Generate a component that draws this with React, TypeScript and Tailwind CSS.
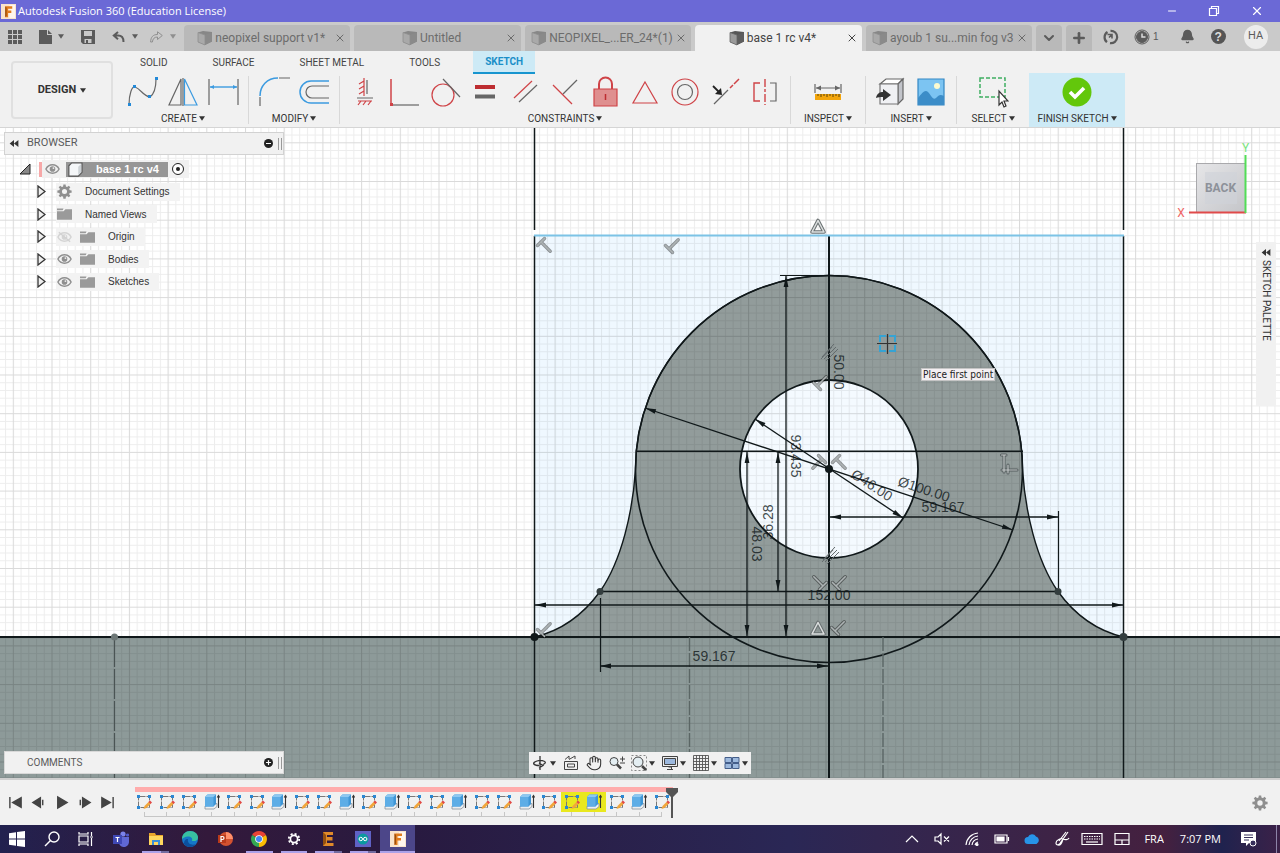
import React from 'react';
import { Bell, X, ChevronDown, Plus, Minus, Hand } from 'lucide-react';

type Feature = 'sketch' | 'extrude';

interface DocTab {
  name: string;
  active?: boolean;
}

interface TreeRow {
  name: string;
  icon: 'gear' | 'folder';
  eye?: 'on' | 'off';
}

const docTabs: DocTab[] = [
  { name: 'neopixel support v1*' },
  { name: 'Untitled' },
  { name: 'NEOPIXEL_...ER_24*(1)' },
  { name: 'base 1 rc v4*', active: true },
  { name: 'ayoub 1 su...min fog v3' },
];

const treeRows: TreeRow[] = [
  { name: 'Document Settings', icon: 'gear' },
  { name: 'Named Views', icon: 'folder' },
  { name: 'Origin', icon: 'folder', eye: 'off' },
  { name: 'Bodies', icon: 'folder', eye: 'on' },
  { name: 'Sketches', icon: 'folder', eye: 'on' },
];

const S: Feature = 'sketch';
const E: Feature = 'extrude';
const features: Feature[] = [S, S, S, E, S, S, E, S, S, E, S, E, S, S, E, S, S, E, S, S, E, S, E, S];

const Caret = ({ className = '' }: { className?: string }) => (
  <svg viewBox="0 0 8 6" className={`h-[5px] w-[6px] shrink-0 fill-current ${className}`}>
    <path d="M0 0h8L4 6z" />
  </svg>
);

const CubeIcon = ({ active }: { active?: boolean }) => (
  <svg viewBox="0 0 16 16" className={`h-4 w-4 shrink-0 ${active ? '' : 'opacity-50'}`}>
    <path d="M1 2.500L6 1l9 1v9.500L8 15 1 12z" fill="#565656" />
    <path d="M1 2.500l7 2.500v10L1 12z" fill="#9a9a9a" />
    <path d="M8 5l7-3v9.500L8 15z" fill="#5d5d5d" />
    <path d="M1 2.500v9.500l7 3V5z" fill="none" stroke="#666" strokeWidth=".8" />
  </svg>
);

const AppLogo = ({ className = '' }: { className?: string }) => (
  <svg viewBox="0 0 16 16" className={`shrink-0 ${className}`}>
    <rect width="16" height="16" fill="#f8e3cc" />
    <path d="M9 1h6v14H9z" fill="#fff6ec" />
    <path d="M4.500 2.500H12V5H7.500v2H11v2.500H7.500V14h-3z" fill="#e07b1d" />
    <path d="M4.500 2.500l1.500 1.500v8.500L4.500 14z" fill="#9c4d0b" />
  </svg>
);

const GearIcon = ({ className = '' }: { className?: string }) => (
  <svg viewBox="-8 -8 16 16" className={`shrink-0 ${className}`}>
    <circle r="4.200" fill="none" stroke="currentColor" strokeWidth="3" />
    {[0, 45, 90, 135, 180, 225, 270, 315].map((a) => (
      <path key={a} d="M-1.600 -4.500L-1.200 -7.600H1.200L1.600 -4.500z" fill="currentColor" transform={`rotate(${a})`} />
    ))}
  </svg>
);

const TitleBar = () => (
  <header className="flex h-[22px] shrink-0 items-center justify-between bg-[#6b69d6] text-white">
    <div className="flex items-center gap-[2px] pl-[1px]">
      <AppLogo className="h-[15px] w-[15px]" />
      <span className="font-['Open_Sans',sans-serif] text-[11px]">Autodesk Fusion 360 (Education License)</span>
    </div>
    <div className="flex items-center gap-[30px] pr-4">
      <button aria-label="Minimize"><Minus className="h-3 w-3" strokeWidth={2} /></button>
      <button aria-label="Restore">
        <svg viewBox="0 0 12 12" className="h-3 w-3" fill="none" stroke="#fff" strokeWidth="1.200">
          <path d="M1.500 3.500h7v7h-7zM3.500 3.500v-2h7v7h-2" />
        </svg>
      </button>
      <button aria-label="Close"><X className="h-[14px] w-[14px]" strokeWidth={2} /></button>
    </div>
  </header>
);

const TabBar = () => (
  <div className="flex h-[29px] shrink-0 bg-[#cacaca] text-[#5b5b5b]">
    <div className="flex w-[184px] shrink-0 items-center pl-2">
      <button aria-label="Data panel">
        <svg viewBox="0 0 14 14" className="h-[14px] w-[14px] fill-current">
          {[0, 5, 10].map((x) => [0, 5, 10].map((y) => <rect key={`${x}-${y}`} x={x} y={y} width="4" height="4" />))}
        </svg>
      </button>
      <button aria-label="File" className="ml-[17px] flex items-center gap-[5px]">
        <svg viewBox="0 0 14 16" className="h-4 w-[14px] fill-current"><path d="M0 1h8v5h5v9H0zM9 1l4 4H9z" /></svg>
        <Caret />
      </button>
      <button aria-label="Save" className="ml-[17px]">
        <svg viewBox="0 0 14 14" className="h-[14px] w-[14px]">
          <path d="M0 0h14v14H2l-2-2z" fill="#5b5b5b" />
          <path d="M3 1h8v5H3zM3.500 9h7v4h-7z" fill="#cacaca" />
          <path d="M5 10h2v3H5z" fill="#5b5b5b" />
        </svg>
      </button>
      <button aria-label="Undo" className="ml-[17px] flex items-center gap-[7px]">
        <svg viewBox="0 0 13 12" className="h-3 w-[13px]">
          <path d="M6 1L1.800 4.600 6 8.200M2.500 4.600H6c3.500 0 5.500 2.500 5.500 6.400" fill="none" stroke="currentColor" strokeWidth="2" />
        </svg>
        <Caret />
      </button>
      <button aria-label="Redo" className="ml-3 flex items-center gap-[7px] text-[#8f8f8f]">
        <svg viewBox="0 0 13 12" className="h-3 w-[13px]">
          <path d="M12.300 4.500L7.500 .8v2.700C3 3.500 .8 6 .6 11h1.800C2.800 8 4 6 7.500 6v2.500z" fill="none" stroke="currentColor" />
        </svg>
        <Caret />
      </button>
    </div>
    <nav className="flex min-w-0 flex-1 gap-1 pt-[3px] font-['Roboto',sans-serif]">
      {docTabs.map((tab) => (
        <div
          key={tab.name}
          className={`flex min-w-0 flex-1 items-center rounded-t-sm px-1 ${tab.active ? 'bg-[#f1f1f1] text-[#444]' : 'bg-[#b9b9b9] text-[#6c6c6c]'}`}
        >
          <button className="flex min-w-0 flex-1 items-center justify-center gap-[2px]">
            <CubeIcon active={tab.active} />
            <span className="whitespace-nowrap text-[12px]">{tab.name}</span>
          </button>
          <button aria-label={`Close ${tab.name}`} className="shrink-0"><X className="h-3 w-3" strokeWidth={2} /></button>
        </div>
      ))}
    </nav>
    <div className="flex w-[248px] shrink-0 items-center">
      <div className="flex h-full gap-1 px-1 pt-[3px]">
        <button aria-label="All tabs" className="flex w-[26px] items-center justify-center rounded-t-sm bg-[#b9b9b9]">
          <ChevronDown className="h-4 w-4" strokeWidth={3} />
        </button>
        <button aria-label="New tab" className="flex w-[26px] items-center justify-center rounded-t-sm bg-[#b9b9b9]">
          <Plus className="h-4 w-4" strokeWidth={4} />
        </button>
      </div>
      <button aria-label="Updates" className="ml-[7px]">
        <svg viewBox="0 0 16 16" className="h-4 w-4" fill="none" stroke="#5b5b5b" strokeWidth="2.200">
          <path d="M4 13.200A6.200 6.200 0 0 1 4.500 3M7.500 1.800A6.200 6.200 0 1 1 7 14.100" />
          <path d="M4.500 5.500L9 5.500 9 9.500M9 5.500L6 8.500" strokeWidth="1.600" />
        </svg>
      </button>
      <button aria-label="Job status" className="ml-[15px] flex items-center gap-[3px] text-[10px]">
        <svg viewBox="0 0 16 16" className="h-4 w-4" fill="none" stroke="#5b5b5b">
          <circle cx="8" cy="8" r="7" strokeWidth="1" />
          <circle cx="8" cy="8" r="5.500" fill="#5b5b5b" />
          <path d="M8 4.500V8h3.500" stroke="#ddd" strokeWidth="1.500" />
        </svg>
        1
      </button>
      <button aria-label="Notifications" className="ml-[21px]"><Bell className="h-[15px] w-[15px] fill-current" /></button>
      <button aria-label="Help" className="ml-4 flex h-[15px] w-[15px] items-center justify-center rounded-full bg-[#555] text-[12px] font-bold text-[#ddd]">?</button>
      <button className="ml-[18px] flex h-6 w-6 items-center justify-center rounded-full bg-[#ececec] font-['Roboto',sans-serif] text-[11px]">HA</button>
    </div>
  </div>
);

const Tool = ({ name, children }: { name: string; children: React.ReactNode }) => (
  <button aria-label={name} className="flex w-10 justify-center">
    <svg viewBox="0 0 32 32" className="h-8 w-8" fill="none" strokeWidth="1.200">{children}</svg>
  </button>
);

const Group = ({ label, className = '', children }: { label: string; className?: string; children: React.ReactNode }) => (
  <div className={`flex shrink-0 flex-col items-center justify-between px-[5px] pt-[3px] ${className}`}>
    <div className="flex">{children}</div>
    <button className="flex items-center gap-[2px] text-[10px] leading-[17px] whitespace-nowrap text-[#333]">
      {label} <Caret />
    </button>
  </div>
);

const Separator = () => <div className="mt-[3px] mb-[3px] w-px bg-[#d8d8d8]" />;

const RED = '#cf4347';
const DARK = '#666';
const BLUE = '#3c9be0';

const Ribbon = () => (
  <section className="flex h-[77px] shrink-0 border-b border-[#d5d5d5] bg-[#f1f1f1] font-['Roboto',sans-serif]">
    <div className="w-[118px] shrink-0 pt-[10px] pr-[5px] pb-[8px] pl-[11px]">
      <button className="flex h-full w-full items-center justify-center gap-1 rounded border-2 border-[#e0e0e0] text-[11px] font-bold text-[#333]">
        DESIGN <Caret />
      </button>
    </div>
    <div className="flex min-w-0 flex-1 flex-col">
      <nav className="flex h-[23px] shrink-0 gap-[21px] pl-[10px] text-[10px] text-[#444]">
        <button className="px-3">SOLID</button>
        <button className="px-3">SURFACE</button>
        <button className="px-3">SHEET METAL</button>
        <button className="px-3">TOOLS</button>
        <button className="border-b-2 border-[#1795cf] bg-[#cdeaf6] px-3 font-bold text-[#1b8fc8]">SKETCH</button>
      </nav>
      <div className="-mt-px flex min-h-0 flex-1">
        <Group label="CREATE">
          <Tool name="Spline">
            <path d="M2 29C2 18 5 10 8 11c6 2 8 9 15 10 4-3 6-10 6-18" stroke={DARK} />
            <g fill="#2389d7"><path d="M1 27h3v3H1zM6 9h3v3H6zM21 19h3v3h-3zM28 1h3v3h-3z" /></g>
          </Tool>
          <Tool name="Mirror">
            <path d="M14 3v26H2z" stroke={DARK} />
            <path d="M16 2v28" stroke="#888" strokeWidth="1.600" />
            <path d="M17.500 3v26H30z" stroke={BLUE} />
          </Tool>
          <Tool name="Sketch dimension">
            <path d="M2 3v26M31 3v26" stroke={DARK} />
            <path d="M3 11h27" stroke={BLUE} strokeWidth="1.400" />
            <path d="M3 11l4-2v4zM30 11l-4-2v4z" fill={BLUE} />
          </Tool>
        </Group>
        <Separator />
        <Group label="MODIFY">
          <Tool name="Fillet">
            <path d="M2 30V21M21 2h11" stroke={DARK} />
            <path d="M2 20C2 10 9 2 20 2" stroke={BLUE} strokeWidth="1.500" />
          </Tool>
          <Tool name="Offset">
            <path d="M31 5H13a11 11 0 0 0 0 22h18" stroke={BLUE} strokeWidth="1.500" />
            <path d="M31 10H14a6 6 0 0 0 0 12h17" stroke={DARK} />
          </Tool>
        </Group>
        <Separator />
        <Group label="CONSTRAINTS">
          <Tool name="Horizontal/Vertical">
            <path d="M15 2v18M15 5l-5 3M15 10l-5 3M15 15l-5 3M9 25h14M12 25l-3 4M17 25l-3 4M22 25l-3 4" stroke={RED} />
            <path d="M18 4v14M8 22h16" stroke={DARK} />
          </Tool>
          <Tool name="Coincident">
            <path d="M2 3v26" stroke={RED} strokeWidth="1.500" />
            <path d="M2 29h28" stroke={DARK} />
            <path d="M1 27h3v3H1z" fill={RED} />
          </Tool>
          <Tool name="Tangent">
            <circle cx="14" cy="19" r="11" stroke={RED} />
            <path d="M14 3l17 18" stroke={DARK} />
          </Tool>
          <Tool name="Equal">
            <path d="M6 11h20" stroke="#bd2d31" strokeWidth="4" />
            <path d="M6 20.500h20" stroke={DARK} strokeWidth="4" />
          </Tool>
          <Tool name="Parallel">
            <path d="M5 22L23 5" stroke={RED} />
            <path d="M10 26L28 9" stroke={DARK} />
          </Tool>
          <Tool name="Perpendicular">
            <path d="M4 9l19 19" stroke={RED} />
            <path d="M14 18L28 4" stroke={DARK} />
          </Tool>
          <Tool name="Fix">
            <path d="M10 14V8a6 6 0 0 1 13 0v6" stroke={RED} strokeWidth="2" />
            <path d="M5 13h23v17H5z" fill="#df8f8f" stroke={RED} />
            <path d="M16.500 18v6" stroke="#bd2d31" strokeWidth="1.500" />
          </Tool>
          <Tool name="Midpoint"><path d="M16 6l12 21H4z" stroke={RED} /></Tool>
          <Tool name="Concentric">
            <circle cx="16" cy="16" r="13" stroke={RED} />
            <circle cx="16" cy="16" r="7.500" stroke={DARK} />
          </Tool>
          <Tool name="Collinear">
            <path d="M5 28l14-14" stroke={DARK} />
            <path d="M21 12l3-3M25 8l5-5" stroke={RED} strokeWidth="1.500" />
            <path d="M4 10l7 7" stroke="#222" strokeWidth="1.800" />
            <path d="M13 19l-7-1 6-6z" fill="#222" />
          </Tool>
          <Tool name="Symmetry">
            <path d="M11 7H5v18h6" stroke={RED} strokeWidth="1.400" />
            <path d="M16 3v26" stroke={RED} strokeWidth="1.400" strokeDasharray="8 2 3 2" />
            <path d="M21 7h6v18h-6" stroke={DARK} />
          </Tool>
        </Group>
        <Separator />
        <Group label="INSPECT" className="w-[74px]">
          <Tool name="Measure">
            <path d="M3 8v9M29 8v9M4 12h24" stroke={DARK} />
            <path d="M4 12l5-2.500v5zM28 12l-5-2.500v5z" fill={DARK} />
            <path d="M3 18h26v6H3z" fill="#f2a50c" />
            <path d="M6 18v2M9 18v3M12 18v2M15 18v3M18 18v2M21 18v3M24 18v2M27 18v3" stroke="#5d4208" strokeWidth="1" />
          </Tool>
        </Group>
        <Separator />
        <Group label="INSERT">
          <Tool name="Insert derive">
            <path d="M5 8l6-5h17l-5 5z" fill="#fff" stroke="#666" />
            <path d="M23 8l5-5v20l-5 5z" fill="#c2c4ca" stroke="#666" />
            <path d="M5 8h18v20H5z" fill="#f0f1f4" stroke="#777" />
            <path d="M1 22c1-5 4-6 7-6v-3l8 6-8 6v-4c-3 0-5 0-7 1z" fill="#333" />
          </Tool>
          <Tool name="Canvas">
            <path d="M3 3h26v26H3z" fill="#7cc4f2" stroke="#3387c4" />
            <circle cx="22" cy="10" r="3" fill="#fcfbd0" />
            <path d="M3 22c4-5 7-9 10-6s5 9 8 6 4-4 8-2v9H3z" fill="#3c8dc8" />
          </Tool>
        </Group>
        <Separator />
        <Group label="SELECT" className="w-[72px]">
          <Tool name="Window select">
            <path d="M3 2h25v19H3z" stroke="#3fae62" strokeDasharray="4 2" strokeWidth="1.500" />
            <path d="M22 15v14l3-3 2 5 2-1-2-5h4z" fill="#fff" stroke="#333" />
          </Tool>
        </Group>
        <Group label="FINISH SKETCH" className="w-24 bg-[#cdeaf6]">
          <Tool name="Finish sketch">
            <circle cx="16" cy="16" r="14.500" fill="#63c70b" />
            <path d="M9 16l5 5 9-9" stroke="#fff" strokeWidth="3.600" />
          </Tool>
        </Group>
      </div>
    </div>
  </section>
);

const Arrow = ({ x, y, angle }: { x: number; y: number; angle: number }) => (
  <path d="M0 0L-11 2.400V-2.400z" fill="#10181a" stroke="none" transform={`translate(${x} ${y}) rotate(${angle})`} />
);

const Dimension = ({ x1, y1, x2, y2 }: { x1: number; y1: number; x2: number; y2: number }) => {
  const angle = (Math.atan2(y2 - y1, x2 - x1) * 180) / Math.PI;
  return (
    <g>
      <path d={`M${x1} ${y1}L${x2} ${y2}`} strokeWidth="1.300" />
      <Arrow x={x2} y={y2} angle={angle} />
      <Arrow x={x1} y={y1} angle={angle + 180} />
    </g>
  );
};

const Label = ({ x, y, angle = 0, children }: { x: number; y: number; angle?: number; children: string }) => (
  <text x="0" y="5" textAnchor="middle" fontSize="14" fill="#10181a" fillOpacity=".8" stroke="none" transform={`translate(${x} ${y}) rotate(${angle})`}>
    {children}
  </text>
);

// perpendicular glyph, stem pointing right at 0 degrees
const Perp = ({ x, y, angle }: { x: number; y: number; angle: number }) => (
  <g transform={`translate(${x} ${y}) rotate(${angle})`} fill="none">
    <path d="M0 -5V5M0 0H13" stroke="#000" strokeOpacity=".4" strokeWidth="3.400" strokeLinecap="round" />
    <path d="M0 -5V5M0 0H13" stroke="#adb3b4" strokeWidth="1.600" strokeLinecap="round" />
  </g>
);

const Parallel = ({ x, y }: { x: number; y: number }) => (
  <g transform={`translate(${x} ${y})`} stroke="#646c6e" strokeWidth="1" fill="none">
    <path d="M-7 4L5 -9M-5 6L7 -6M-3 8L9 -4M-8 6L3 -6" />
  </g>
);

const Midpoint = ({ x, y }: { x: number; y: number }) => (
  <g transform={`translate(${x} ${y})`} fill="none" strokeLinejoin="round">
    <path d="M0 -5.500L6 6H-6z" stroke="#6b7273" strokeWidth="3.600" />
    <path d="M0 -5.500L6 6H-6z" stroke="#dcdfdf" strokeWidth="1.500" />
  </g>
);

const PROFILE =
  'M534.500 637C560 631 583 615 600 591.500C622 560 633 510 635.500 469A193.500 193.500 0 0 1 1022.500 469C1025 510 1036 560 1058 591.500C1075 615 1098 631 1123.500 637z';

const SketchCanvas = () => (
  <svg
    viewBox="0 128 1280 650"
    preserveAspectRatio="xMidYMid slice"
    className="absolute inset-0 h-full w-full bg-white font-['Liberation_Sans',sans-serif]"
  >
    <defs>
      <pattern id="minor" width="7.740" height="7.740" x="12.800" y="142.300" patternUnits="userSpaceOnUse">
        <path d="M0 .5H7.740M.5 0V7.740" stroke="#000" strokeOpacity=".07" />
      </pattern>
      <pattern id="major" width="38.700" height="38.700" x="12.800" y="142.300" patternUnits="userSpaceOnUse">
        <path d="M0 .5H38.700M.5 0V38.700" stroke="#000" strokeOpacity=".08" />
      </pattern>
      <linearGradient id="cube" x1="0" y1="0" x2="1" y2="1">
        <stop offset="0" stopColor="#e6e6e8" />
        <stop offset="1" stopColor="#c4c5c9" />
      </linearGradient>
    </defs>
    <rect x="534.500" y="236" width="589" height="401" fill="#eff8ff" />
    <path d={PROFILE} fill="#929c9b" />
    <circle cx="829" cy="469" r="89" fill="#f4faff" />
    <rect x="0" y="637" width="1280" height="141" fill="#8d9a99" />
    <rect x="0" y="128" width="1280" height="650" fill="url(#minor)" />
    <rect x="0" y="128" width="1280" height="650" fill="url(#major)" />

    <g stroke="#10181a" fill="none">
      <path d="M534.500 128V230M1123.500 128V230M534.500 236V778M1123.500 236V778" strokeWidth="1.500" />
      <path d="M0 637H1280" strokeWidth="1.800" />
      <path d="M829 236V778" strokeWidth="2" />
      <path d="M636 451.300H1023M600 591.500H1058" strokeWidth="1.600" />
      <path d={PROFILE} strokeWidth="1.400" />
      <circle cx="829" cy="469" r="193.500" strokeWidth="1.600" />
      <circle cx="829" cy="469" r="89" strokeWidth="1.800" />
      <path d="M780 275.500H829M600.500 598V672M1058.500 511V588" strokeWidth="1.200" />
      <path d="M689.500 637V778M883 637V778" stroke="#5b6665" strokeWidth="1.400" strokeDasharray="14 2" />
      <path d="M114.500 637V778" stroke="#4a5454" strokeWidth="1.200" strokeDasharray="30 2" />
    </g>
    <path d="M534 235.500H1124" stroke="#7cc3e6" strokeWidth="2" />

    <Perp x={541} y={242} angle={45} />
    <Perp x={669} y={249} angle={-45} />
    <Perp x={541} y={633} angle={-45} />
    <Perp x={817} y={386} angle={-45} />
    <Perp x={836} y={459} angle={45} />
    <Perp x={822} y={459} angle={135} />
    <Perp x={823} y={586} angle={225} />
    <Perp x={836} y={586} angle={-45} />
    <Perp x={835} y={631} angle={-45} />
    <g fill="none" strokeLinecap="round">
      <path d="M1004 455V472M1002 470H1017M1001.500 455H1006M1008 465V473" stroke="#545c5e" strokeWidth="3" />
      <path d="M1004 455V472M1002 470H1017M1001.500 455H1006M1008 465V473" stroke="#c3c8c8" strokeWidth="1.200" />
    </g>
    <Parallel x={829} y={353} />
    <Parallel x={830} y={556} />
    <Midpoint x={818} y={226} />
    <Midpoint x={818} y={628} />

    <g stroke="#10181a">
      <Dimension x1={786} y1={276} x2={786} y2={636} />
      <Dimension x1={747} y1={452} x2={747} y2={636} />
      <Dimension x1={778} y1={452} x2={778} y2={591} />
      <Dimension x1={535} y1={605} x2={1123} y2={605} />
      <Dimension x1={830} y1={517} x2={1058} y2={517} />
      <Dimension x1={600} y1={666} x2={828} y2={666} />
      <Dimension x1={645} y1={408} x2={1013} y2={530} />
      <Dimension x1={755} y1={419} x2={903} y2={518} />
    </g>
    <g fill="#10181a">
      <circle cx="829" cy="469" r="4" />
      <circle cx="534.500" cy="637" r="4" />
      <circle cx="1123.500" cy="637" r="4" fill="#333d3e" />
      <circle cx="600" cy="591.500" r="3.500" fill="#333d3e" />
      <circle cx="1058" cy="591.500" r="3.500" fill="#333d3e" />
      <circle cx="114.500" cy="637" r="3.500" fill="#6d7776" />
    </g>

    <Label x={839} y={372} angle={90}>50.00</Label>
    <Label x={796} y={456} angle={90}>93.435</Label>
    <Label x={768} y={522} angle={-90}>36.28</Label>
    <Label x={757} y={544} angle={90}>48.03</Label>
    <Label x={714} y={656}>59.167</Label>
    <Label x={829} y={595}>152.00</Label>
    <Label x={943} y={507}>59.167</Label>
    <Label x={872} y={485} angle={33}>Ø46.00</Label>
    <Label x={924} y={489} angle={18}>Ø100.00</Label>

    <path d="M880 342v-6h6M889 336h6v6M895 345v6h-6M886 351h-6v-6" fill="none" stroke="#36a3d3" strokeWidth="2" />
    <path d="M877 343.500h20M887.500 334v20" stroke="#333" strokeWidth="1.200" />

    {/* view cube */}
    <rect x="1196.500" y="163.500" width="49" height="49" fill="url(#cube)" stroke="#a9a9ac" />
    <rect x="1205" y="172" width="32" height="32" fill="#cfd2d8" opacity=".6" />
    <path d="M1189 212.500H1246" stroke="#e04a4a" strokeWidth="2" />
    <path d="M1245.500 155V213" stroke="#52dd57" strokeWidth="2" />
    <text x="1220.500" y="192" textAnchor="middle" fontSize="12" fontWeight="700" fill="#8d9199" className="font-['Roboto',sans-serif]">BACK</text>
    <text x="1181" y="217" textAnchor="middle" fontSize="12" fill="#f06464" className="font-['Roboto',sans-serif]">X</text>
    <text x="1245.500" y="152" textAnchor="middle" fontSize="12" fill="#7ae57d" className="font-['Roboto',sans-serif]">Y</text>
  </svg>
);

const Eye = ({ off }: { off?: boolean }) => (
  <svg viewBox="0 0 16 12" className={`h-3 w-[15px] shrink-0 ${off ? 'opacity-30' : ''}`}>
    <path d="M1 6C4 0 12 0 15 6 12 12 4 12 1 6z" fill="none" stroke="#8f8f8f" strokeWidth="1.600" />
    <circle cx="8" cy="6" r="3" fill="#8f8f8f" />
    <circle cx="9" cy="5" r="1" fill="#eee" />
    {off && <path d="M2 1l12 10" stroke="#888" strokeWidth="1.500" />}
  </svg>
);

const Folder = () => (
  <svg viewBox="0 0 16 12" className="h-3 w-[15px] shrink-0" fill="#9a9a9a">
    <path d="M0 0h7l-1 2H0zM0 3h7l2-2h7v11H0z" />
  </svg>
);

const BrowserTree = () => (
  <aside className="absolute top-1 left-1 w-[280px]">
    <div className="flex h-[23px] items-center border border-[#d2d2d2] bg-[#f1f1f1] pr-[1px] pl-1 font-['Roboto',sans-serif] text-[11px] text-[#5a5a5a]">
      <button aria-label="Collapse browser">
        <svg viewBox="0 0 10 8" className="h-[7px] w-[10px]"><path d="M5 0v8L0 4zM10 0v8L5 4z" fill="#333" /></svg>
      </button>
      <span className="ml-2 flex-1">BROWSER</span>
      <button aria-label="Display options" className="mr-[5px] flex h-[9px] w-[9px] items-center justify-center rounded-full bg-[#222]"><span className="h-px w-[5px] bg-white" /></button>
      <span className="h-3 w-1 border-x border-[#999]" />
    </div>
    <div className="mt-[5px] flex h-[131px] flex-col justify-between text-[10px] text-[#333]">
      <div className="flex h-[18px] items-center pl-[15px]">
        <svg viewBox="0 0 12 12" className="h-3 w-3"><path d="M1 11h10V1z" fill="#888" stroke="#222" /></svg>
        <span className="ml-2 h-[15px] w-[3px] bg-[#f7a8a8]" />
        <div className="flex h-full items-center bg-[#f1f1f1] pr-[5px] pl-[3px]">
          <Eye />
          <span className="ml-[6px] flex h-[15px] items-center bg-[#969696] pr-[9px] text-[11px] font-bold text-white">
            <svg viewBox="0 0 18 16" className="mr-[13px] h-[15px] w-[17px]">
              <path d="M3 4l3-3h11v10l-4 4H3z" fill="#f4f6f8" stroke="#555" strokeWidth="1.200" />
              <path d="M13 5v9l3-3V2z" fill="#cdd2d6" />
            </svg>
            base 1 rc v4
          </span>
          <label className="ml-1 flex h-3 w-3 items-center justify-center rounded-full border border-[#222] bg-white">
            <input type="radio" defaultChecked aria-label="Activate component" className="h-1 w-1 appearance-none rounded-full bg-[#222]" />
          </label>
        </div>
      </div>
      {treeRows.map((row) => (
        <div key={row.name} className="flex h-[18px] items-center pl-[33px]">
          <button aria-label={`Expand ${row.name}`} className="mr-[10px]">
            <svg viewBox="0 0 9 13" className="h-[13px] w-[9px]"><path d="M1 1l7 5.500L1 12z" fill="#eee" stroke="#333" strokeWidth="1.300" /></svg>
          </button>
          <div className="flex h-[18px] items-center gap-2 bg-[#f3f3f3] pr-[10px] pl-[1px]">
            {row.eye && <Eye off={row.eye === 'off'} />}
            {row.icon === 'gear' ? <GearIcon className="h-[15px] w-[15px] text-[#8f8f8f]" /> : <Folder />}
            <span className="ml-[5px]">{row.name}</span>
          </div>
        </div>
      ))}
    </div>
  </aside>
);

const NavButton = ({ name, caret, children }: { name: string; caret?: boolean; children: React.ReactNode }) => (
  <button aria-label={name} className="flex items-center gap-[2px]">
    {children}
    {caret && <Caret />}
  </button>
);

const NavBar = () => (
  <div className="absolute bottom-1 left-1/2 flex h-[22px] w-[222px] -translate-x-1/2 items-center justify-between bg-[#f1f1f1] px-[3px] text-[#333]">
    <NavButton name="Orbit" caret>
      <svg viewBox="0 0 16 16" className="h-4 w-4" fill="none" stroke="#333" strokeWidth="1.300">
        <path d="M8 1v14M11 9.500C17 7 10 4.500 5 6 -1 8 2 10.500 7 10.500M7 8l4 2.500L7 13" />
      </svg>
    </NavButton>
    <NavButton name="Look at">
      <svg viewBox="0 0 16 16" className="h-4 w-4" fill="none" stroke="#444">
        <path d="M1.500 6.500h13v8h-13zM4.500 9h7v3h-7zM2 4.500L6 1v3M6 4.500L12 1v3" />
      </svg>
    </NavButton>
    <NavButton name="Pan"><Hand className="h-4 w-4" strokeWidth={1.6} /></NavButton>
    <NavButton name="Zoom">
      <svg viewBox="0 0 16 16" className="h-4 w-4" fill="none" stroke="#444">
        <circle cx="5" cy="6.500" r="4" fill="#e4eef2" />
        <path d="M8 9.500l4 4" strokeWidth="2.500" />
        <path d="M11 4h5M13.500 1.500v5M11 8h5" />
      </svg>
    </NavButton>
    <NavButton name="Fit" caret>
      <svg viewBox="0 0 16 16" className="h-4 w-4" fill="none" stroke="#444">
        <path d="M.5 .5h15v15H.5z" strokeDasharray="2 2" stroke="#888" />
        <circle cx="7" cy="7" r="5" fill="#e4eef2" />
        <path d="M11 11l4 4" strokeWidth="2.500" />
      </svg>
    </NavButton>
    <NavButton name="Display settings" caret>
      <svg viewBox="0 0 16 16" className="h-4 w-4" fill="#9db9de" stroke="#444">
        <path d="M.5 1.500h15v10H.5z" fill="#eee" /><path d="M2.500 3.500h11v6h-11z" /><path d="M5 14.500h6M6.500 12h3v2.500" fill="none" />
      </svg>
    </NavButton>
    <NavButton name="Grid and snaps" caret>
      <svg viewBox="0 0 16 16" className="h-4 w-4" fill="none" stroke="#555" strokeWidth=".9">
        <path d="M.5 .5h15v15H.5zM3.500 0v16M6.500 0v16M9.500 0v16M12.500 0v16M0 3.500h16M0 6.500h16M0 9.500h16M0 12.500h16" />
      </svg>
    </NavButton>
    <NavButton name="Viewports" caret>
      <svg viewBox="0 0 16 16" className="h-4 w-4" fill="#9db9de" stroke="#445e8a">
        <path d="M1 2.500h6.500v5H1zM8.500 2.500H15v5H8.500zM1 8.500h6.500v5H1zM8.500 8.500H15v5H8.500z" />
      </svg>
    </NavButton>
  </div>
);

const Viewport = () => (
  <main className="relative min-h-0 flex-1 overflow-hidden">
    <SketchCanvas />
    <BrowserTree />
    <div className="absolute top-[240px] left-[921px] border border-[#c5c5c5] bg-[#f3eff2] px-[1px] font-['DejaVu_Sans_Condensed','DejaVu_Sans',sans-serif] text-[10px] leading-[11px] text-[#222]">
      Place first point
    </div>
    <aside className="absolute top-[114px] right-1 flex h-[164px] w-5 flex-col items-center bg-[#f1f1f1] pt-[7px]">
      <button className="flex flex-col items-center gap-1 text-[10px] leading-3 text-[#333]">
        <svg viewBox="0 0 10 8" className="h-[7px] w-[10px]"><path d="M5 0v8L0 4zM10 0v8L5 4z" fill="#333" /></svg>
        <span className="font-['Roboto',sans-serif] [writing-mode:vertical-rl]">SKETCH PALETTE</span>
      </button>
    </aside>
    <section className="absolute bottom-1 left-1 flex h-[23px] w-[280px] items-center border border-[#d8d8d8] bg-[#f1f1f1] pr-[1px] pl-[22px] font-['Roboto',sans-serif] text-[10px] text-[#5a5a5a]">
      <span className="flex-1">COMMENTS</span>
      <button aria-label="Add comment" className="mr-[5px] flex h-[9px] w-[9px] items-center justify-center rounded-full bg-[#222] text-white"><Plus className="h-[7px] w-[7px]" strokeWidth={4} /></button>
      <span className="h-3 w-1 border-x border-[#999]" />
    </section>
    <NavBar />
  </main>
);

const FeatureIcon = ({ type }: { type: Feature }) =>
  type === 'sketch' ? (
    <svg viewBox="0 0 16 16" className="h-4 w-4">
      <path d="M2.500 2.500h11v11h-11z" fill="none" stroke="#777" strokeDasharray="7 1" />
      <g fill="#2b87d3"><path d="M1 1h3v3H1zM12 1h3v3h-3zM1 12h3v3H1z" /></g>
      <path d="M7.500 15l1-3 4.500-4.500 2 2L10.500 14z" fill="#f1a63c" />
      <path d="M12.500 8l1.500-1.500 2 2L14.500 10z" fill="#e14848" />
    </svg>
  ) : (
    <svg viewBox="0 0 16 16" className="h-4 w-4">
      <path d="M1 12v3h9l3-2.500v-3z" fill="#eceef0" stroke="#8b9299" strokeWidth=".8" />
      <path d="M1 3l2.500-2.500H12V10l-2.500 2.500H1z" fill="#3f96d6" />
      <path d="M1 3h8.500v9.500H1z" fill="#5dade6" />
      <path d="M1 3L3.500 .5H12L9.500 3z" fill="#8cc8f2" />
      <path d="M14.500 14V2M13.200 3.500l1.300-2 1.200 2" fill="none" stroke="#333" strokeWidth="1.100" />
    </svg>
  );

const playback = [
  { name: 'Go to start', d: 'M2 2v12M14 3v10L5 8z' },
  { name: 'Step back', d: 'M10 3v10L2 8zM12.500 5v6' },
  { name: 'Play', d: 'M4 2v12L14 8z' },
  { name: 'Step forward', d: 'M6 3v10l8-5zM3.500 5v6' },
  { name: 'Go to end', d: 'M14 2v12M2 3v10l9-5z' },
];

const Timeline = () => (
  <footer className="flex h-[47px] shrink-0 items-center border-t-2 border-[#cfcfcf] bg-[#f1f1f1]">
    <div className="flex w-[133px] shrink-0 gap-2 pl-2">
      {playback.map((p) => (
        <button key={p.name} aria-label={p.name}>
          <svg viewBox="0 0 16 16" className="h-[15px] w-[15px]" fill="#444" stroke="#444" strokeWidth="1.500"><path d={p.d} /></svg>
        </button>
      ))}
    </div>
    <div className="relative w-[540px] shrink-0 pb-[2px]">
      <div className="ml-[2px] h-[5px] bg-[#ffacac]" />
      <div className="flex">
        {features.map((f, i) => (
          <button key={i} aria-label={`${f} ${i + 1}`} className="flex flex-1 flex-col items-center">
            <span className={`flex h-5 w-full items-center justify-center ${i === 19 || i === 20 ? 'bg-[#e9e81e]' : ''}`}>
              <FeatureIcon type={f} />
            </span>
            <span className="h-[4px] w-px bg-[#c6c6c6]" />
          </button>
        ))}
      </div>
      <div className="mx-[11px] h-px bg-[#c6c6c6]" />
      <svg viewBox="0 0 12 32" className="absolute top-0 -right-[5px] h-8 w-3">
        <path d="M0 1h12v4L7 10v21H5V10L0 5z" fill="#555" />
      </svg>
    </div>
    <button aria-label="Timeline settings" className="mr-3 ml-auto"><GearIcon className="h-4 w-4 text-[#8f8f8f]" /></button>
  </footer>
);

interface TaskItem {
  name: string;
  icon: React.ReactNode;
  open?: boolean;
  stacked?: boolean;
  active?: boolean;
}

const taskItems: TaskItem[] = [
  { name: 'Start', icon: <path d="M0 2.200L7 1.200V7.500H0zM8 1L16 0v7.500H8zM0 8.500h7v6.300L0 13.800zM8 8.500h8V16l-8-1z" fill="#fff" /> },
  { name: 'Search', icon: <g fill="none" stroke="#fff" strokeWidth="1.400"><circle cx="10" cy="6" r="5" /><path d="M6.500 9.500L1 15" /></g> },
  { name: 'Task view', icon: <g fill="none" stroke="#fff" strokeWidth="1.200"><path d="M1 5h9v6H1zM1 1v2h9V1M1 15v-2h9v2M13.500 1v4M13.500 7v8M12 6h3" /></g> },
  {
    name: 'Teams',
    icon: (
      <g>
        <circle cx="10" cy="3" r="2.600" fill="#7b83eb" /><circle cx="14.500" cy="4" r="1.600" fill="#5059c9" />
        <path d="M6 6h10v5c0 3-3 5-5 5s-5-1-5-5z" fill="#6068d4" /><path d="M0 4h9v9H0z" fill="#3f48b5" />
        <path d="M2.500 6.500h4M4.500 6.500V11" stroke="#fff" strokeWidth="1.200" />
      </g>
    ),
  },
  {
    name: 'File Explorer', open: true, stacked: true,
    icon: <g><path d="M1 2h6l1 2h7v10H1z" fill="#e9a52c" /><path d="M1 5h14v9H1z" fill="#ffd75e" /><path d="M4 14V9h8v5h-2v-3H6v3z" fill="#3a8fd8" /></g>,
  },
  {
    name: 'Edge',
    icon: (
      <g>
        <circle cx="8" cy="8" r="8" fill="#1577c8" />
        <path d="M0 8C0 3 4 0 8 0c5 0 8 3 8 6.500 0 3-3 4-6 3.500 1-3-1-4.500-4-4.500C3 5.500 1 7 0 8z" fill="#38c0a2" />
        <path d="M6 8c-1 4 3 7 8 5-3 4-9 4-12 0 0-3 1-5 4-5z" fill="#0c4f9e" />
      </g>
    ),
  },
  {
    name: 'PowerPoint',
    icon: <g><circle cx="9" cy="8" r="7" fill="#d35230" /><path d="M9 1a7 7 0 0 1 7 7H9z" fill="#ff8f6b" /><path d="M1 4h8v8H1z" fill="#b93a1b" /><path d="M4 11V5.500h1.500a1.500 1.500 0 0 1 0 3H4" fill="none" stroke="#fff" strokeWidth="1.200" /></g>,
  },
  {
    name: 'Chrome', open: true,
    icon: (
      <g>
        <path d="M8 8L1.100 4A8 8 0 0 1 14.900 4z" fill="#ea4335" />
        <path d="M8 8l6.900-4A8 8 0 0 1 8 16z" fill="#fbbc04" />
        <path d="M8 8v8A8 8 0 0 1 1.100 4z" fill="#34a853" />
        <circle cx="8" cy="8" r="3.800" fill="#fff" /><circle cx="8" cy="8" r="3" fill="#4285f4" />
      </g>
    ),
  },
  {
    name: 'Settings', open: true,
    icon: <g transform="translate(8 8)" stroke="#fff" fill="none"><circle r="3.600" strokeWidth="1.700" /><circle r="5.200" strokeWidth="1.800" strokeDasharray="2.040 2.040" /></g>,
  },
  {
    name: 'Eagle', open: true, stacked: true,
    icon: <g><path d="M3 1h10v3H7v2h5.500v3.500H7V12h6.500v3H3z" fill="#e08a2a" /><path d="M3 1l3 3v8l-3 3z" fill="#95500e" /></g>,
  },
  {
    name: 'Arduino', open: true, stacked: true,
    icon: <g><path d="M0 0h16v16H0z" fill="#5f62c5" /><circle cx="8" cy="8" r="5.500" fill="#0b9aa0" /><g fill="none" stroke="#fff"><circle cx="5.800" cy="8" r="1.700" /><circle cx="10.200" cy="8" r="1.700" /></g></g>,
  },
  { name: 'Fusion 360', open: true, active: true, icon: <AppLogo /> },
];

const TrayIcon = ({ name, className = 'w-4', box = '0 0 16 16', children }: { name: string; className?: string; box?: string; children: React.ReactNode }) => (
  <button aria-label={name}>
    <svg viewBox={box} className={`h-4 ${className}`} fill="none" stroke="#fff" strokeWidth="1.200">{children}</svg>
  </button>
);

const Taskbar = () => (
  <div className="flex h-7 shrink-0 items-center justify-between bg-linear-to-r from-[#22214f] via-[#1f224e] to-[#2c2550] font-['Open_Sans',sans-serif] text-[11px] text-white">
    <div className="flex h-full w-[415px] bg-linear-to-r from-transparent via-[#33193b] to-[#281a40]">
      {taskItems.map((item) => (
        <button key={item.name} aria-label={item.name} className={`relative flex flex-1 items-center justify-center ${item.active ? 'bg-[#4c4689]' : ''}`}>
          <svg viewBox="0 0 16 16" className="h-4 w-4">{item.icon}</svg>
          {item.open && (
            <span className={`absolute bottom-0 flex h-[2px] ${item.active ? 'inset-x-0' : 'inset-x-1'}`}>
              <span className="flex-1 bg-[#aaa1e8]" />
              {item.stacked && <span className="w-2 bg-[#716b9f]" />}
            </span>
          )}
        </button>
      ))}
    </div>
    <div className="flex h-full flex-1 items-center justify-end bg-linear-to-r from-[#281a40] via-[#2a2755] to-[#45203f]">
      <div className="flex items-center gap-[14px]">
        <TrayIcon name="Show hidden icons"><path d="M2 11l6-6 6 6" /></TrayIcon>
        <TrayIcon name="Volume"><path d="M1 6h3l3-3v10l-3-3H1zM10 5.500l5 5M15 5.500l-5 5" /></TrayIcon>
        <TrayIcon name="Network"><path d="M2 14A13 13 0 0 1 14 2M5 14a10 10 0 0 1 9-9M8 14a7 7 0 0 1 6-6M11 14a4 4 0 0 1 3-3" /><circle cx="13" cy="13.500" r="1" fill="#fff" /></TrayIcon>
        <TrayIcon name="Battery"><path d="M1 4h12v8H1zM14.500 6v4" /><path d="M3 6h7v4H3z" fill="#fff" /></TrayIcon>
        <TrayIcon name="OneDrive"><path d="M4 13a3.500 3.500 0 0 1 0-7 4.500 4.500 0 0 1 8-.5A4 4 0 0 1 12.500 13z" fill="#2794e8" stroke="none" /></TrayIcon>
        <TrayIcon name="Pen"><path d="M14 1L7 11c-1 3-5 4-5 1s5-5 7-4 5 1 6-1M12 1L5 10M4 14c4 1 4-4 5-6" /></TrayIcon>
        <TrayIcon name="Keyboard" className="-mx-[3px] w-[22px]" box="0 0 22 16"><path d="M1 2.500h20v11H1z" /><path d="M3 5.500h16M3 8h16" strokeDasharray="1.500 1" /><path d="M5 11h12" /></TrayIcon>
        <TrayIcon name="Touchpad"><path d="M1 2.500h14v11H1zM1 9h14M8 9v4.500" /></TrayIcon>
      </div>
      <button className="ml-[14px]">FRA</button>
    </div>
    <div className="flex h-full items-center bg-linear-to-r from-[#45203f] via-[#1f224e] to-[#3b2148] pr-[3px]">
      <button className="ml-4">7:07 PM</button>
      <button aria-label="Notifications" className="mr-[19px] ml-5">
        <svg viewBox="0 0 16 16" className="h-4 w-4">
          <path d="M0 1h15v11H8l-3 3v-3H0z" fill="#fff" />
          <path d="M3 4h9M3 6.500h9M3 9h5" stroke="#37305c" />
          <circle cx="12" cy="12" r="3" fill="#37305c" stroke="#fff" />
        </svg>
      </button>
      <span className="h-full w-px bg-[#8d84a8]" />
    </div>
  </div>
);

const App: React.FC = () => {
  return (
    <div className="flex h-screen flex-col overflow-hidden font-['Liberation_Sans',Arial,sans-serif]">
      <TitleBar />
      <TabBar />
      <Ribbon />
      <Viewport />
      <Timeline />
      <Taskbar />
    </div>
  );
};

export default App;
